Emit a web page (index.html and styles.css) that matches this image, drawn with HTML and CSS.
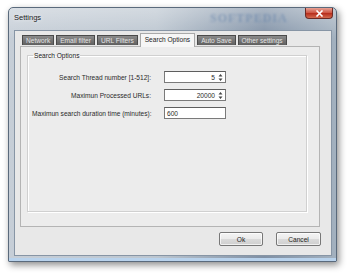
FILE: index.html
```html
<!DOCTYPE html>
<html lang="en">
<head>
    <meta charset="UTF-8">
    <title>Settings</title>
    <link rel="stylesheet" href="styles.css">
</head>
<body>
    <div class="window">
        <div class="titlebar">
            <span class="title">Settings</span>
            <span class="mark">SOFTPEDIA</span>
            <button class="close">
                <svg width="9" height="7" viewBox="0 0 9 7"><path d="M1.5 0.5 L7.5 6.5 M7.5 0.5 L1.5 6.5" stroke="#fff" stroke-width="1.6"/></svg>
            </button>
        </div>

        <div class="client">
            <div class="tabs">
                <div class="tab">Network</div>
                <div class="tab">Email filter</div>
                <div class="tab">URL Filters</div>
                <div class="tab active">Search Options</div>
                <div class="tab">Auto Save</div>
                <div class="tab">Other settings</div>
            </div>

            <div class="panel">
                <fieldset class="group">
                    <legend>Search Options</legend>
                    <div class="form">
                        <label>Search Thread number [1-512]:</label>
                        <div class="field spin"><span class="val">5</span><span class="arrows">
                            <svg width="5" height="9" viewBox="0 0 5 9"><path d="M0.5 3.5 L2.5 1 L4.5 3.5 Z M0.5 5.5 L2.5 8 L4.5 5.5 Z" fill="#444"/></svg></span></div>

                        <label>Maximun Processed URLs:</label>
                        <div class="field spin"><span class="val">20000</span><span class="arrows">
                            <svg width="5" height="9" viewBox="0 0 5 9"><path d="M0.5 3.5 L2.5 1 L4.5 3.5 Z M0.5 5.5 L2.5 8 L4.5 5.5 Z" fill="#444"/></svg></span></div>

                        <label>Maximun search duration time (minutes):</label>
                        <div class="field"><span class="val">600</span></div>
                    </div>
                </fieldset>
            </div>

            <div class="buttons">
                <button class="btn">Ok</button>
                <button class="btn">Cancel</button>
            </div>
        </div>
    </div>
</body>
</html>
```

FILE: styles.css
```css
body {
    margin: 0;
    width: 350px;
    height: 275px;
    background: #fff;
    font-family: 'Liberation Sans', Arial, sans-serif;
    font-size: 6.6px;
    color: #2a2a2a;
    overflow: hidden;
}

.window {
    margin: 7px 0 0 8px;
    width: 329px;
    height: 255px;
    box-sizing: border-box;
    padding: 0 4px 5px 5px;
    border: 1px solid #5a6a7c;
    border-radius: 5px 5px 1px 1px;
    background:
        linear-gradient(to bottom, rgba(255,255,255,0.35), rgba(255,255,255,0) 12%),
        linear-gradient(to right, #c6ced7 0%, #bcc6d0 45%, #7f90a5 78%, #a3b1bf 100%);
    box-shadow: 2px 3px 7px rgba(0, 0, 0, 0.45), inset 0 -3px 0 #b8d2ec;
    display: flex;
    flex-direction: column;
}

.titlebar {
    height: 22px;
    display: flex;
    align-items: flex-start;
    position: relative;
    flex-shrink: 0;
}

.title {
    margin-top: 5px;
    font-size: 7.5px;
    color: #1c1c1c;
    text-shadow: 0 0 4px rgba(255,255,255,0.9);
}

.mark {
    position: absolute;
    left: 196px;
    top: 3px;
    font-family: 'Liberation Serif', serif;
    font-size: 12px;
    font-weight: bold;
    letter-spacing: 1px;
    color: #5f7fa8;
    opacity: 0.5;
    filter: blur(1.2px);
}

.close {
    margin-left: auto;
    margin-right: -1px;
    width: 28px;
    height: 11px;
    border: 1px solid #6b2a25;
    border-top: none;
    border-radius: 0 0 4px 4px;
    background: linear-gradient(to bottom, #e8a295 0%, #cf5a48 45%, #b8301e 55%, #d36a4f 100%);
    display: flex;
    justify-content: center;
    align-items: center;
    padding: 0;
}

.client {
    flex: 1;
    background: #e8e8e8;
    border: 1px solid #8795a5;
    padding: 1px 11px 9px 5px;
    display: flex;
    flex-direction: column;
}

.tabs {
    display: flex;
    gap: 2px;
    padding-left: 2px;
    height: 14px;
    align-items: flex-end;
    position: relative;
    z-index: 1;
}

.tab {
    height: 10px;
    line-height: 9px;
    padding: 0 3px;
    box-sizing: border-box;
    white-space: nowrap;
    flex-shrink: 0;
    background: linear-gradient(to bottom, #8b8b8b, #5f5f5f);
    border: 1px solid #4a4a4a;
    border-bottom: none;
    color: #e4e4e4;
    margin-bottom: 1px;
}

.tab.active {
    height: 14px;
    line-height: 12px;
    padding: 0 4px;
    background: #f6f6f6;
    border-color: #a9a9a9;
    color: #222;
    margin-bottom: -1px;
}

.panel {
    flex: 1;
    background: #ececec;
    border: 1px solid #b4b4b4;
    padding: 5px 12px 14px 6px;
    display: flex;
}

.group {
    flex: 1;
    margin: 0;
    border: 1px solid #d0d0d0;
    box-shadow: inset 1px 1px 0 #fff, 1px 1px 0 #fff;
    padding: 12px 4px 0 4px;
}

.group legend {
    padding: 0 1px;
    margin-left: 1px;
    color: #222;
}

.form {
    display: grid;
    grid-template-columns: 119px 62px;
    column-gap: 13px;
    row-gap: 6px;
    align-items: center;
}

.form label {
    text-align: right;
    white-space: nowrap;
}

.field {
    height: 12px;
    box-sizing: border-box;
    background: #fff;
    border: 1px solid #7a7a7a;
    border-top-color: #5e5e5e;
    display: flex;
    align-items: center;
    padding: 0 2px;
}

.spin .val {
    flex: 1;
    text-align: right;
    padding-right: 3px;
}

.arrows {
    display: flex;
    align-items: center;
}

.buttons {
    display: flex;
    justify-content: flex-end;
    gap: 13px;
    padding-top: 5px;
    margin-right: -1px;
}

.btn {
    height: 14px;
    width: 44px;
    padding: 0;
    font-family: 'Liberation Sans', Arial, sans-serif;
    font-size: 6.6px;
    color: #222;
    border: 1px solid #777;
    border-radius: 2px;
    background: linear-gradient(to bottom, #f4f4f4 0%, #ebebeb 48%, #dadada 52%, #cfcfcf 100%);
    box-shadow: inset 0 0 0 1px rgba(255,255,255,0.7);
}

.btn + .btn {
    width: 45px;
}
```
